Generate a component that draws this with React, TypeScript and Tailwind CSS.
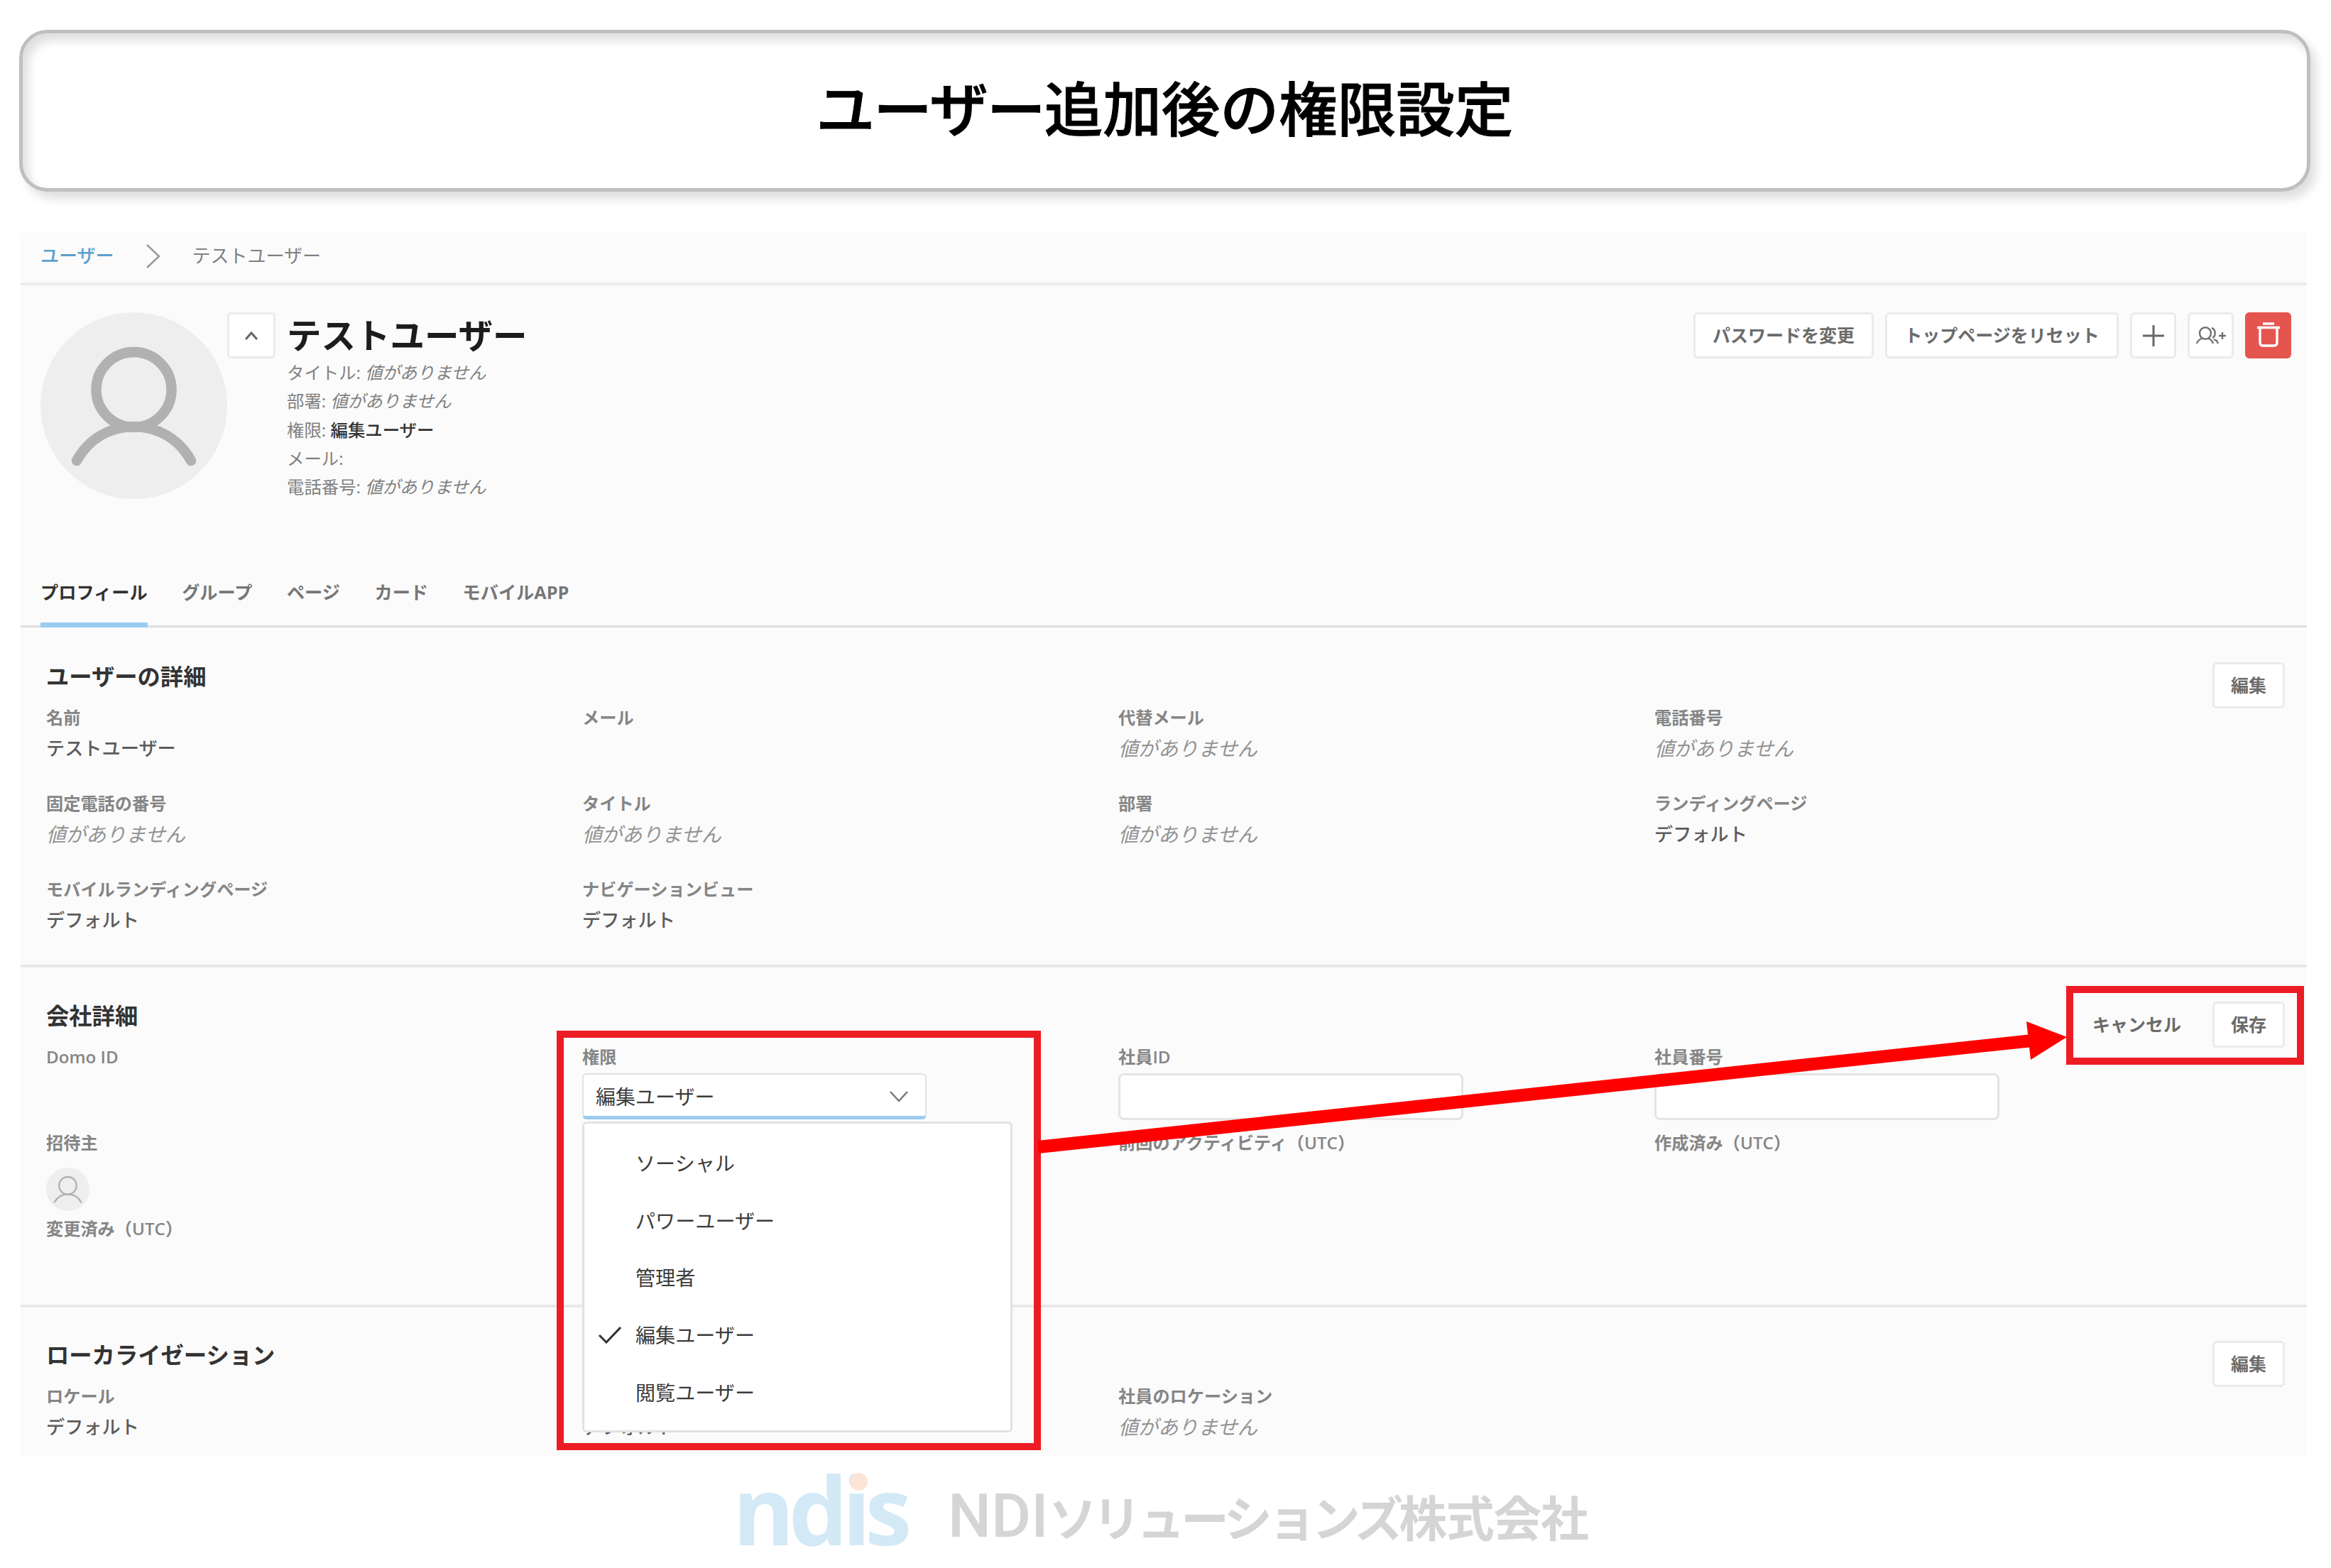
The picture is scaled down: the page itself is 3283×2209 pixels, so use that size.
import type { ReactNode } from "react";

const EMPTY = "値がありません";

const TABS = ["プロフィール", "グループ", "ページ", "カード", "モバイルAPP"];

const ROLES = ["ソーシャル", "パワーユーザー", "管理者", "編集ユーザー", "閲覧ユーザー"];
const CURRENT_ROLE = "編集ユーザー";

const SUMMARY: { label: string; value?: string }[] = [
  { label: "タイトル", value: EMPTY },
  { label: "部署", value: EMPTY },
  { label: "権限", value: CURRENT_ROLE },
  { label: "メール" },
  { label: "電話番号", value: EMPTY },
];

const USER_FIELDS: { label: string; value?: string }[] = [
  { label: "名前", value: "テストユーザー" },
  { label: "メール" },
  { label: "代替メール", value: EMPTY },
  { label: "電話番号", value: EMPTY },
  { label: "固定電話の番号", value: EMPTY },
  { label: "タイトル", value: EMPTY },
  { label: "部署", value: EMPTY },
  { label: "ランディングページ", value: "デフォルト" },
  { label: "モバイルランディングページ", value: "デフォルト" },
  { label: "ナビゲーションビュー", value: "デフォルト" },
];

function Avatar({ className, strokeWidth }: { className: string; strokeWidth: number }) {
  return (
    <svg viewBox="0 0 263 263" className={className} fill="none" stroke="#b1b1b1" strokeWidth={strokeWidth} strokeLinecap="round">
      <circle cx="131.5" cy="131.5" r="131.5" fill="#eeeeee" stroke="none" />
      <circle cx="131.5" cy="109" r="53" />
      <path d="M51 209 C68 178 98 161 131.5 161 C165 161 195 178 212 209" />
    </svg>
  );
}

function Button({ children, className = "" }: { children: ReactNode; className?: string }) {
  return (
    <button
      className={`flex h-[65px] shrink-0 items-center justify-center rounded-[6px] border-[3px] border-[#ebebeb] bg-white text-[25px] font-bold text-[#6b6b6b] ${className}`}
    >
      {children}
    </button>
  );
}

function Field({ label, value, children }: { label?: string; value?: string; children?: ReactNode }) {
  return (
    <div className="h-[121px]">
      <div className="h-10 text-[24.2px] leading-10 font-semibold text-[#858585]">{label}</div>
      {value === EMPTY && <div className="text-[28.1px] leading-[46px] text-[#939393] italic">{value}</div>}
      {value && value !== EMPTY && <div className="text-[26.2px] leading-[46px] font-medium text-[#5c5c5c]">{value}</div>}
      {children}
    </div>
  );
}

function Section({
  title,
  actions,
  className = "",
  children,
}: {
  title: string;
  actions: ReactNode;
  className?: string;
  children: ReactNode;
}) {
  return (
    <section className={`pr-[31px] pl-[36px] ${className}`}>
      <div className="flex h-[58px] items-start justify-between">
        <h2 className="text-[32.3px] leading-[38px] font-bold text-[#333]">{title}</h2>
        <div className="flex items-center">{actions}</div>
      </div>
      <div className="grid grid-cols-[755px_755px_755px_1fr]">{children}</div>
    </section>
  );
}

function RoleSelect() {
  return (
    <div className="relative mt-[3px] w-[485px]">
      <div className="flex h-[65px] items-center justify-between rounded-[6px] border-2 border-b-[5px] border-[#e2e2e2] border-b-[#99ccf0] bg-white pt-[3px] pr-6 pl-[17px] text-[28px] text-[#3c3c3c]">
        {CURRENT_ROLE}
        <svg viewBox="0 0 26 16" className="h-4 w-[26px]" fill="none" stroke="#777" strokeWidth="2.5">
          <path d="M1 1 L13 14 L25 1" />
        </svg>
      </div>
      <ul className="absolute top-[68px] left-0 z-10 h-[438px] w-[606px] rounded-[6px] border-[3px] border-[#e2e2e2] bg-white pt-[16px]">
        {ROLES.map((role) => (
          <li key={role} className="flex h-[80.6px] items-center text-[28.1px] text-[#3c3c3c]">
            <span className="w-[72px] pl-5">
              {role === CURRENT_ROLE && (
                <svg viewBox="0 0 32 24" className="h-6 w-8" fill="none" stroke="#333" strokeWidth="3">
                  <path d="M1 12 L11 22 L31 1" />
                </svg>
              )}
            </span>
            {role}
          </li>
        ))}
      </ul>
    </div>
  );
}

function TextInput() {
  return <div className="mt-[3px] h-[66px] w-[486px] rounded-[8px] border-[3px] border-[#e4e4e4] bg-white" />;
}

// Red frames and the arrow drawn on top of the page
function Callouts() {
  return (
    <>
      <div className="absolute top-[1452px] left-[784px] z-20 h-[591px] w-[682px] border-[10px] border-[#ed1c24]" />
      <div className="absolute top-[1389px] left-[2910px] z-20 h-[111px] w-[335px] border-[10px] border-[#ed1c24]" />
      <svg viewBox="0 0 3283 2209" className="absolute inset-0 z-20 h-[2209px] w-[3283px]">
        <path d="M1462 1616 L2862 1466" stroke="#ff0000" strokeWidth="18" />
        <path d="M2854 1439 L2911 1461 L2860 1493 Z" fill="#ff0000" />
      </svg>
    </>
  );
}

export default function App() {
  return (
    <div className="relative flex h-[2209px] w-[3283px] flex-col overflow-hidden bg-white font-['Open_Sans','Noto_Sans_CJK_JP',sans-serif]">
      <header className="mt-[42px] ml-[27px] flex h-[228px] w-[3227px] shrink-0 items-center justify-center rounded-[40px] border-[5px] border-[#bfbfbf] bg-white shadow-[8px_10px_14px_rgba(0,0,0,0.13),inset_8px_10px_14px_rgba(0,0,0,0.13)]">
        <h1 className="pb-[5px] text-[82.6px] leading-none font-medium text-black [-webkit-text-stroke:1px_black]">
          <span className="tracking-[-1.9px]">ユーザー</span>追加後の権限設定
        </h1>
      </header>

      <main className="mt-[58px] ml-[29px] h-[1724px] w-[3220px] shrink-0 overflow-hidden bg-[#fbfbfb]">
        <nav className="flex h-[74px] items-center border-b-4 border-[#ececec] pb-[5px] pl-[28px] text-[26px]">
          <span className="font-medium text-[#5b9fcc]">ユーザー</span>
          <svg viewBox="0 0 20 34" className="mr-[44px] ml-[46px] h-[34px] w-5" fill="none" stroke="#999" strokeWidth="2.5">
            <path d="M1 1 L18 17 L1 33" />
          </svg>
          <span className="text-[#808080]">テストユーザー</span>
        </nav>

        <div className="flex h-[368px] items-start pt-[38px] pr-[22px] pl-[28px]">
          <Avatar className="size-[263px] shrink-0" strokeWidth={14.5} />
          <Button className="w-[68px]">
            <svg viewBox="0 0 20 14" className="h-[14px] w-5" fill="none" stroke="#666" strokeWidth="3">
              <path d="M2 12 L10 3 L18 12" />
            </svg>
          </Button>
          <div className="ml-4 grow">
            <div className="h-[65px] text-[48.5px] leading-[65px] font-bold text-[#1c1c1c]">テストユーザー</div>
            {SUMMARY.map(({ label, value }) => (
              <div key={label} className="h-[40.3px] text-[24.4px] leading-[40px] text-[#808080]">
                {label}: {value && <span className={value === EMPTY ? "italic" : "font-medium text-[#333]"}>{value}</span>}
              </div>
            ))}
          </div>
          <div className="flex gap-4">
            <Button className="w-[254px]">パスワードを変更</Button>
            <Button className="w-[329px]">トップページをリセット</Button>
            <Button className="w-[65px]">
              <svg viewBox="0 0 32 32" className="size-8" stroke="#666" strokeWidth="3">
                <path d="M16 1 V31 M1 16 H31" />
              </svg>
            </Button>
            <Button className="w-[65px]">
              <svg viewBox="0 0 44 26" className="h-[26px] w-11 shrink-0" fill="none" stroke="#707070" strokeWidth="2.4">
                <ellipse cx="14" cy="9.5" rx="8" ry="8.3" />
                <path d="M2 24 C3 20 6 18 10 16.5 M18 16.5 C21 18 24 20 25 24 M23 2 C29 4 29 14 24 16 M26 18 L30 20 L32 24 M33 13 H43 M38 8 V18" />
              </svg>
            </Button>
            <button className="flex size-[65px] items-center justify-center rounded-[6px] bg-[#e5554f]">
              <svg viewBox="0 0 32 36" className="mb-1 h-9 w-8" fill="none" stroke="#fff" strokeWidth="3.4">
                <path d="M0 8.5 H32 M8 3 H24" />
                <path d="M4 8.5 V29 Q4 34 8 34 H24 Q28 34 28 29 V8.5" />
              </svg>
            </button>
          </div>
        </div>

        <div className="flex h-[114px] gap-[48.5px] border-b-[3px] border-[#dfdfdf] pl-[28px] text-[25.2px] font-bold text-[#777]">
          {TABS.map((tab, i) => (
            <div
              key={tab}
              className={`h-[114px] pt-[44px] leading-10 ${i === 0 ? "border-b-[7px] border-[#99ccf0] text-[#333]" : ""}`}
            >
              {tab}
            </div>
          ))}
        </div>

        <Section
          title="ユーザーの詳細"
          className="h-[479px] border-b-4 border-[#e8e8e8] pt-[49px]"
          actions={<Button className="w-[102px]">編集</Button>}
        >
          {USER_FIELDS.map(({ label, value }) => (
            <Field key={label} label={label} value={value} />
          ))}
        </Section>

        <Section
          title="会社詳細"
          className="h-[479px] border-b-4 border-[#e8e8e8] pt-[48px]"
          actions={
            <>
              <span className="mr-[44px] text-[25px] font-bold text-[#6b6b6b]">キャンセル</span>
              <Button className="w-[102px]">保存</Button>
            </>
          }
        >
          <Field label="Domo ID" />
          <Field label="権限">
            <RoleSelect />
          </Field>
          <Field label="社員ID">
            <TextInput />
          </Field>
          <Field label="社員番号">
            <TextInput />
          </Field>
          <Field label="招待主">
            <Avatar className="mt-[15px] size-[61px]" strokeWidth={10} />
          </Field>
          <div />
          <Field label="前回のアクティビティ（UTC）" />
          <Field label="作成済み（UTC）" />
          <Field label="変更済み（UTC）" />
        </Section>

        <Section title="ローカライゼーション" className="pt-[47px]" actions={<Button className="w-[102px]">編集</Button>}>
          <Field label="ロケール" value="デフォルト" />
          <Field value="デフォルト" />
          <Field label="社員のロケーション" value={EMPTY} />
        </Section>
      </main>

      <footer className="flex h-[157px] items-start pt-[20px] pl-[1032px] leading-none">
        <div className="relative w-[303px] text-[132px] leading-[108px] font-bold tracking-[-8px] text-[#d3e9f6]">
          ndis
          <span className="absolute top-[3px] left-[165px] size-[25px] rounded-full bg-[#fce4d6]" />
        </div>
        <div className="mt-[24px] flex items-baseline text-[68px] leading-[80px] font-bold text-[#d5d5d5]">
          <span className="w-[142px] font-[Roboto] text-[86px] font-medium">NDI</span>
          <span className="tracking-[-6px]">ソリューションズ</span>
          <span className="tracking-[-1.5px]">株式会社</span>
        </div>
      </footer>

      <Callouts />
    </div>
  );
}
